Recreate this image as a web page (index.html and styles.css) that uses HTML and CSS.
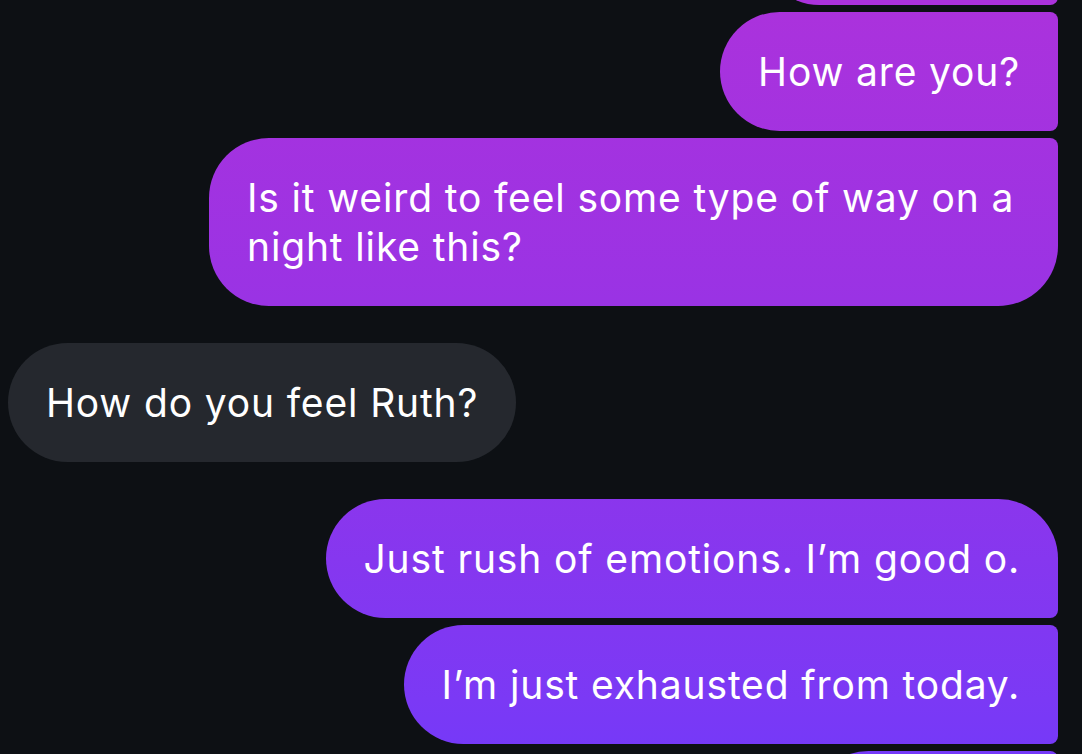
FILE: index.html
```html
<!DOCTYPE html>
<html lang="en">
<head>
<meta charset="utf-8">
<title>Messages</title>
<link rel="stylesheet" href="styles.css">
</head>
<body>
<main class="thread">
  <div class="group">
    <div class="bubble out first">Hello there!</div>
    <div class="bubble out">How are you?</div>
    <div class="bubble out last">Is it weird to feel some type of way on a night like this?</div>
  </div>
  <div class="group in-group">
    <div class="bubble in">How do you feel Ruth?</div>
  </div>
  <div class="group">
    <div class="bubble out first">Just rush of emotions. I’m good o.</div>
    <div class="bubble out">I’m just exhausted from today.</div>
    <div class="bubble out last">Goodbye</div>
  </div>
</main>
</body>
</html>
```

FILE: styles.css
```css
html, body {
  margin: 0;
  height: 100%;
  overflow: hidden;
  background: #0d1014;
}

body {
  font-family: Inter, "Noto Sans", sans-serif;
  color: #fff;
}

.thread {
  display: flex;
  flex-direction: column;
  gap: 37px;
  padding: 0 24px 0 8px;
  margin-top: -114px;
}

.group {
  display: flex;
  flex-direction: column;
  align-items: flex-end;
  gap: 7px;
}

.in-group {
  align-items: flex-start;
}

.bubble {
  box-sizing: border-box;
  max-width: 849px;
  padding: 35px 38px 35px;
  font-size: 39px;
  line-height: 49px;
  letter-spacing: 0.85px;
}

.out {
  background: linear-gradient(180deg, #ab32dc 0px, #9a33e4 300px, #7b39f5 700px, #7539f8 754px) fixed;
  border-radius: 60px 8px 8px 60px;
}

.out.first {
  border-top-right-radius: 60px;
}

.out.last {
  border-bottom-right-radius: 60px;
}

.in {
  background: #25282e;
  border-radius: 60px;
}
```
